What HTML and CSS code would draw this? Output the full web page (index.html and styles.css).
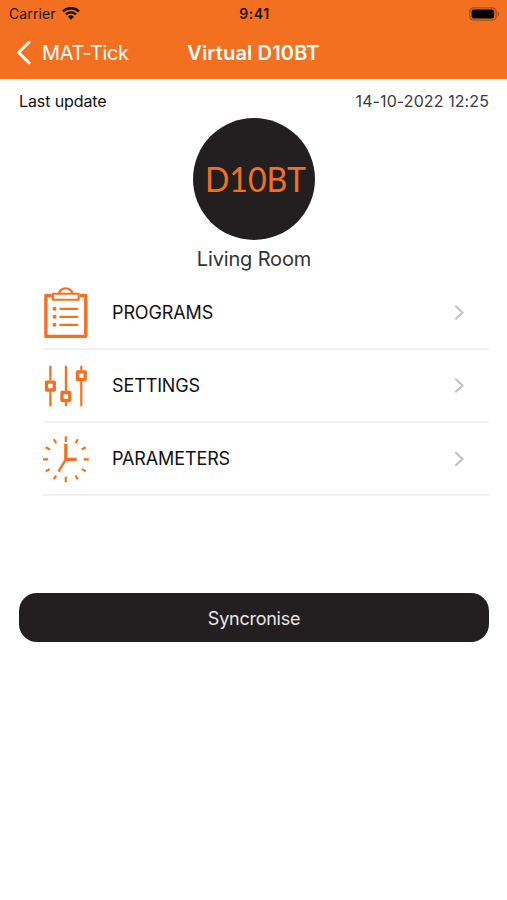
FILE: index.html
```
<!DOCTYPE html>
<html lang="en">
<head>
    <meta charset="UTF-8">
    <meta name="viewport" content="width=device-width, initial-scale=1.0">
    <title>Virtual D10BT</title>
    <link rel="stylesheet" href="styles.css">
</head>
<body>

<header class="header">
    <div class="status-bar">
        <div class="carrier">
            <span class="carrier-name">Carrier</span>
            <svg class="wifi" width="18" height="14" viewBox="0 0 18 14">
                <path d="M1 4.4a11.5 11.5 0 0 1 16 0" fill="none" stroke="#111" stroke-width="2.5"/>
                <path d="M3.9 7.5a7.3 7.3 0 0 1 10.2 0" fill="none" stroke="#111" stroke-width="2.4"/>
                <path d="M6 9.8a4.3 4.3 0 0 1 6 0L9 12.8z" fill="#111"/>
            </svg>
        </div>
        <span class="time">9:41</span>
        <svg class="battery" width="31" height="14" viewBox="0 0 31 14">
            <rect x=".8" y=".8" width="26.4" height="12.4" rx="4" fill="none" stroke="#a84c18" stroke-width="1.3"/>
            <rect x="2.6" y="2.6" width="22.6" height="8.8" rx="2" fill="#000"/>
            <path d="M28.7 4.8a2.3 2.3 0 0 1 0 4.4z" fill="#a84c18"/>
        </svg>
    </div>
    <nav class="nav-bar">
        <div class="back">
            <svg width="16" height="24" viewBox="0 0 16 24">
                <path d="M13 1.3L2.6 11.5 13 21.7" fill="none" stroke="#fff" stroke-width="3" stroke-linecap="round" stroke-linejoin="round"/>
            </svg>
            <span class="back-label">MAT-Tick</span>
        </div>
        <h1 class="title">Virtual D10BT</h1>
        <div></div>
    </nav>
</header>

<main class="content">
    <div class="update">
        <span class="update-label">Last update</span>
        <span class="update-date">14-10-2022 12:25</span>
    </div>

    <div class="device">
        <div class="avatar"><span class="avatar-text">D10BT</span></div>
        <span class="room">Living Room</span>
    </div>

    <ul class="menu">
        <li class="menu-item">
            <svg class="menu-icon" width="50" height="54" viewBox="0 0 50 54" fill="none" stroke="#f37021">
                <path d="M10.5 9.5H4.9v40.9h39.9V9.5h-5.9" stroke-width="3.4" stroke-linejoin="round"/>
                <path d="M11.9 7.8h25.8v6H11.9z" stroke-width="2.1" stroke-linejoin="round"/>
                <path d="M18.2 7.4a6.5 5 0 0 1 13 0" stroke-width="2.4"/>
                <path d="M19.4 22.8h16.8M19.4 30.8h16.8M19.4 38.8h16.8" stroke-width="2.3" stroke-linecap="round"/>
                <path d="M13.5 22.8h.01M13.5 30.8h.01M13.5 38.8h.01" stroke-width="4" stroke-linecap="round"/>
            </svg>
            <span class="menu-label">PROGRAMS</span>
            <svg class="chevron" width="12" height="18" viewBox="0 0 12 18"><path d="M2.3 1.7L9.4 8.5l-7.1 6.8"/></svg>
        </li>
        <li class="menu-item">
            <svg class="menu-icon" width="50" height="54" viewBox="0 0 50 54" fill="none" stroke="#f37021">
                <path d="M9.4 7.5v13M9.4 32.5v14M24.9 7.5v24M24.9 43v3.5M40.3 7.5v3.5M40.3 22v24.5" stroke-width="2.2" stroke-linecap="round"/>
                <path d="M5.5 23.2h7.8v7.8H5.5zM21 33.5h7.8v7.8H21zM36.4 12.8h7.8v7.8h-7.8z" stroke-width="3.3" stroke-linejoin="round"/>
            </svg>
            <span class="menu-label">SETTINGS</span>
            <svg class="chevron" width="12" height="18" viewBox="0 0 12 18"><path d="M2.3 1.7L9.4 8.5l-7.1 6.8"/></svg>
        </li>
        <li class="menu-item">
            <svg class="menu-icon" width="50" height="54" viewBox="0 0 50 54" fill="none" stroke="#f37021">
                <path d="M24.8 4.3v5.6M24.8 44.7v5.6M2 27.3h5.2M42.6 27.3h5.2" stroke-width="2.2"/>
                <path d="M12.8 7.3l2.3 3.8M36.8 7.3l-2.3 3.8M4.8 15.3l4 2.2M44.8 15.3l-4 2.2M4.8 39.3l4-2.2M44.8 39.3l-4-2.2M12.8 47.3l2.3-3.8M36.8 47.3l-2.3-3.8" stroke-width="2.2"/>
                <path d="M24.8 11.8v15.5h10.8" stroke-width="3.2"/>
                <path d="M24.8 27.3l-7.3 12.4" stroke-width="2.4"/>
            </svg>
            <span class="menu-label">PARAMETERS</span>
            <svg class="chevron" width="12" height="18" viewBox="0 0 12 18"><path d="M2.3 2.2L9.4 9l-7.1 6.8"/></svg>
        </li>
    </ul>

    <button class="sync">Syncronise</button>
</main>

</body>
</html>
```
FILE: styles.css
```
* { box-sizing: border-box; }
body { margin: 0; background-color: #fff; font-family: Inter, "Liberation Sans", sans-serif; color: #111; }
svg { display: block; flex: none; }
span, h1 { white-space: nowrap; }

.header { height: 79px; background-color: #f37021; }
.status-bar { display: grid; grid-template-columns: 1fr auto 1fr; align-items: center; height: 27px; padding: 0 7px 0 9px; color: #1d1009; }
.carrier { display: flex; align-items: center; gap: 6px; }
.carrier-name { font-size: 14px; letter-spacing: 0.1px; }
.time { font-size: 14px; font-weight: 600; letter-spacing: 0.6px; }
.battery { justify-self: end; }

.nav-bar { display: grid; grid-template-columns: 1fr auto 1fr; align-items: center; height: 51px; padding: 0 16px; color: #fff; }
.back { display: flex; align-items: center; gap: 10px; }
.back-label { font-size: 20px; letter-spacing: -0.35px; }
.title { margin: 0; font-size: 20px; font-weight: 600; letter-spacing: 0.15px; }

.content { padding: 0 18px 0 19px; }
.update { display: flex; justify-content: space-between; align-items: center; height: 39px; padding-top: 4px; font-size: 16px; }
.update-label { letter-spacing: -0.1px; }
.update-date { color: #3a3a3a; letter-spacing: 0.1px; }

.device { display: flex; flex-direction: column; align-items: center; }
.avatar { display: flex; align-items: center; justify-content: center; width: 122px; height: 122px; border-radius: 50%; background-color: #231f20; }
.avatar-text { padding: 0 0 1px 2px; font-family: Lato, sans-serif; font-size: 34px; color: #f37021; transform: scaleX(0.945); }
.room { height: 37px; line-height: 38px; font-size: 20px; letter-spacing: -0.15px; color: #333; }

.menu { list-style: none; margin: 0; padding: 0 0 0 24px; }
.menu-item { display: flex; align-items: center; height: 73px; padding-right: 24px; border-bottom: 2px solid #f1f1f1; }
.menu-icon { margin-left: -2px; margin-right: 21px; }
.menu-label { flex: 1; font-size: 18px; letter-spacing: -0.12px; }
.chevron { fill: none; stroke: #c2c2c2; stroke-width: 2.2; }

.sync { display: block; width: 100%; height: 49px; margin: 97px 0 0; padding: 1px 0 0; border: none; border-radius: 18px; background-color: #231f20; color: #e8e6e6; font-family: inherit; font-size: 18px; letter-spacing: -0.25px; }
```
